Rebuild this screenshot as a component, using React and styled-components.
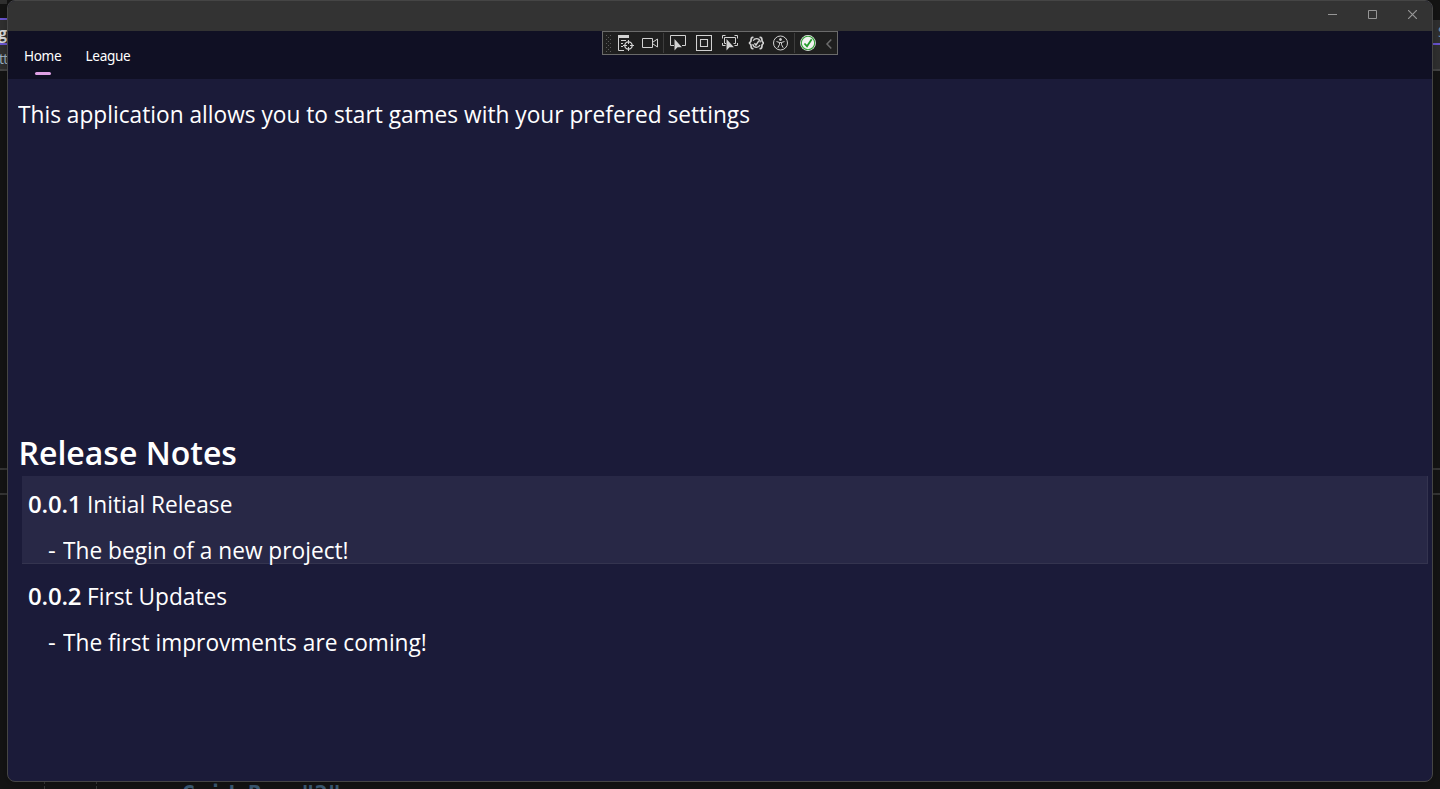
import React from 'react';
import styled, { createGlobalStyle } from 'styled-components';

const GlobalStyle = createGlobalStyle`
  * { box-sizing: border-box; }
  html, body { margin: 0; background: #141414; overflow: hidden; }
  body { font-family: "Open Sans", "Noto Sans", sans-serif; color: #fff; }
`;

const Desktop = styled.div`
  position: relative;
  width: 1440px;
  height: 789px;
  padding: 0 7px;
  background: #141414;
  overflow: hidden;
`;

/* Pieces of the editor that stay visible around the window */
const Strip = styled.div`
  position: absolute;
  ${(p) => (p.$right ? 'right: 0;' : 'left: 0;')}
  top: ${(p) => p.$top}px;
  width: ${(p) => p.$width || 7}px;
  height: ${(p) => p.$height}px;
  background: ${(p) => p.$color};
`;

const Fragment = styled.div`
  position: absolute;
  left: ${(p) => p.$left}px;
  top: ${(p) => p.$top}px;
  font: ${(p) => p.$weight || 400} ${(p) => p.$size}px/1 ${(p) => p.$family || '"Open Sans"'}, sans-serif;
  letter-spacing: ${(p) => p.$spacing || 0}px;
  color: ${(p) => p.$color};
  white-space: pre;
`;

const Guide = styled.div`
  position: absolute;
  left: ${(p) => p.$left}px;
  top: 781px;
  height: 8px;
  border-left: 1px dashed #3a3a3a;
`;

const Window = styled.main`
  position: relative;
  display: flex;
  flex-direction: column;
  width: 1426px;
  height: 782px;
  border: 1px solid #454545;
  border-radius: 8px;
  background: #1b1b39;
  overflow: hidden;
  box-shadow: 0 2px 10px rgba(0, 0, 0, 0.25);
`;

const TitleBar = styled.header`
  display: flex;
  justify-content: flex-end;
  flex: 0 0 30px;
  background: #333;
`;

const CaptionButton = styled.button`
  display: flex;
  align-items: center;
  justify-content: center;
  width: 40px;
  height: 27px;
  padding: 0 0 0 1px;
  border: 0;
  background: none;
  color: #969696;
`;

const Tabs = styled.nav`
  display: flex;
  flex: 0 0 48px;
  padding-left: 4px;
  background: #101024;
`;

const Tab = styled.a`
  display: flex;
  flex-direction: column;
  align-items: center;
  padding: 15px 12.3px 0 12px;
  font-family: "Noto Sans", sans-serif;
  font-size: 13.6px;
  line-height: 20px;
  letter-spacing: -0.35px;
`;

const Indicator = styled.span`
  width: 16px;
  height: 3px;
  margin-top: 6px;
  border-radius: 2px;
  background: #dfa1e5;
`;

const Content = styled.section`
  display: flex;
  flex-direction: column;
  padding: 18px 4px 0 10px;
`;

const Intro = styled.p`
  height: 336px;
  margin: 0;
  font-size: 24px;
  line-height: 34px;
  white-space: nowrap;
`;

const Narrow = styled.span`
  display: inline-block;
  transform: scaleX(0.9455);
  transform-origin: 0 50%;
`;

const Heading = styled.h1`
  margin: 0 0 3px 0.5px;
  font-size: 32px;
  font-weight: 600;
  line-height: 40px;
  height: 40px;
`;

const Release = styled.article`
  height: ${(p) => (p.$selected ? 88 : 92)}px;
  margin: 0 0 ${(p) => (p.$selected ? 4 : 0)}px 4px;
  padding: 5px 0 0 6px;
  border: solid transparent;
  border-width: 0 1px 1px 0;
  ${(p) => p.$selected && 'background: #282846; border-color: #34344f;'}
`;

const Line = styled.p`
  display: flex;
  margin: 0;
  padding-left: ${(p) => p.$indent || 0}px;
  font-size: 24px;
  line-height: 46px;
  height: 46px;
  white-space: nowrap;
`;

const Version = styled.span`
  width: 59px;
  font-weight: 600;
  letter-spacing: -0.2px;
`;

const Dash = styled.span`
  width: 15px;
`;

const DebugBar = styled.div`
  position: absolute;
  left: 594px;
  top: 30px;
  display: flex;
  align-items: flex-start;
  width: 236px;
  height: 24px;
  border: 1px solid #6a6a6a;
  background: #1f1f1f;
`;

const Tool = styled.svg`
  flex: none;
  width: ${(p) => p.$w || 16}px;
  height: 16px;
  margin: 3px 0 0 ${(p) => p.$gap}px;
  fill: none;
  stroke: #d2d2d2;
`;

const Grip = styled.span`
  flex: none;
  width: 6px;
  height: 18px;
  margin: 3px 0 0 3px;
  background:
    radial-gradient(circle at 0.5px 0.5px, #5c5c5c 0.7px, transparent 0.8px) 0 0 / 4px 4px,
    radial-gradient(circle at 0.5px 0.5px, #5c5c5c 0.7px, transparent 0.8px) 2px 2px / 4px 4px;
`;

const Divider = styled.span`
  flex: none;
  width: 1px;
  height: 20px;
  margin: 1px 0 0 ${(p) => p.$gap}px;
  background: #3d3d3d;
`;

function DebugTools() {
  return (
    <DebugBar>
      <Grip />
      <Tool $gap={6}>
        <path d="M0 0h11v3H0z" fill="#d2d2d2" stroke="none" />
        <path d="M.5 3v12.5H6M3 5.5h5M3 8.5h2M3 11.5h2" />
        <circle cx="10.5" cy="10.5" r="3.7" strokeWidth="1.3" />
        <path d="M10.5 5v4M10.5 12v4M5 10.5h4M12 10.5h4" />
      </Tool>
      <Tool $gap={8}>
        <path d="M.5 3.5h10v9H.5zM11 7l4.5-3v8L11 9" />
      </Tool>
      <Divider $gap={5} />
      <Tool $gap={6}>
        <path d="M4 10.5H.5V.5h15v10H12" />
        <path d="M4.5 4v11.5l3-3.3h4.4z" fill="#d2d2d2" stroke="none" />
      </Tool>
      <Tool $gap={10}>
        <path d="M.5.5h15v15H.5zM4.5 4.5h7v7h-7z" strokeWidth="1.1" />
      </Tool>
      <Tool $gap={10}>
        <path d="M.5 3.5v-3h3M12.5.5h3v3M.5 8v2.5h3M15.5 8v2.5h-3M4 8.5H2.5v-6h11v6h-2" />
        <path d="M4.5 4v11.5l3-3.3h4.4z" fill="#d2d2d2" stroke="none" />
      </Tool>
      <Tool $gap={10}>
        <path d="M5.500 2.500C2.800 2 3.200 4 2.900 6.200L1.500 8l1.400 1.800c.3 2.200-.1 4.200 2.600 3.700M11.500 2.500c2.700-.5 2.300 1.500 2.600 3.700L15.500 8l-1.400 1.800c-.3 2.200.1 4.200-2.600 3.700" strokeWidth="1.7" />
        <ellipse cx="8.500" cy="8" rx="3.900" ry="4.300" strokeWidth="1.300" strokeDasharray="9.500 3.380" strokeDashoffset="-2" />
        <path d="M6.400 8.200l1.600 1.800 3-4.300" strokeWidth="1.400" />
      </Tool>
      <Tool $gap={9}>
        <circle cx="7.5" cy="8" r="7" />
        <circle cx="7.5" cy="4.5" r="1" fill="#d2d2d2" />
        <path d="M3.5 6.5l3 1v2l-1.7 3.3M11.5 6.5l-3 1v2l1.7 3.3M6.5 7.5h2" />
      </Tool>
      <Divider $gap={5} />
      <Tool $gap={5}>
        <circle cx="8" cy="8" r="7.9" fill="#f2f2f2" stroke="none" />
        <circle cx="8" cy="8" r="6.7" stroke="#37a03c" strokeWidth="1.1" />
        <path d="M4.4 8.5L7 11.2l4.7-7" stroke="#239b2b" strokeWidth="1.8" />
      </Tool>
      <Tool $gap={9} $w={8}>
        <path d="M6.3 4.5L2 9 6.3 13.5" stroke="#6c6c6c" strokeWidth="1.5" />
      </Tool>
    </DebugBar>
  );
}

function EditorBackdrop() {
  return (
    <>
      {[false, true].map((right) => (
        <React.Fragment key={String(right)}>
          <Strip $right={right} $top={20} $height={50} $color="#303030" />
          <Strip $right={right} $top={43} $height={2} $color="#6a55d2" />
          <Strip $right={right} $top={69} $height={2} $color="#444" />
          <Strip $right={right} $top={468} $height={2} $color="#363636" />
          <Strip $right={right} $top={493} $height={2} $color="#363636" />
        </React.Fragment>
      ))}
      <Strip $top={0} $height={4} $color="#303030" />
      <Strip $top={18} $height={2} $color="#6a55d2" />
      <Fragment $left={-2} $top={25} $size={16} $weight={700} $color="#dcdcdc">g</Fragment>
      <Fragment $left={-1} $top={52} $size={14} $spacing={-0.7} $color="#9fb4c4">tt</Fragment>
      <Fragment $left={1438} $top={25} $size={14} $color="#7295b5">S</Fragment>
      <Guide $left={44} />
      <Guide $left={96} />
      <Fragment $left={182} $top={783} $size={22} $weight={700} $family='"DejaVu Sans Mono"' $color="#3d5c76">
        Grid.Row="2"
      </Fragment>
    </>
  );
}

const releases = [
  { version: '0.0.1', title: 'Initial Release', note: 'The begin of a new project!', selected: true },
  { version: '0.0.2', title: 'First Updates', note: 'The first improvments are coming!' },
];

export default function App() {
  return (
    <>
      <GlobalStyle />
      <Desktop>
        <EditorBackdrop />
        <Window>
          <TitleBar>
            <CaptionButton aria-label="Minimize">
              <svg width="9" height="9" stroke="currentColor"><path d="M0 4.5h9" /></svg>
            </CaptionButton>
            <CaptionButton aria-label="Maximize">
              <svg width="9" height="9" fill="none" stroke="currentColor"><path d="M.5.5h8v8h-8z" /></svg>
            </CaptionButton>
            <CaptionButton aria-label="Close">
              <svg width="9" height="9" stroke="currentColor" strokeWidth="1.2"><path d="M0 0l9 9M9 0L0 9" /></svg>
            </CaptionButton>
          </TitleBar>
          <Tabs>
            <Tab>Home<Indicator /></Tab>
            <Tab>League</Tab>
          </Tabs>
          <Content>
            <Intro>
              <Narrow>This application allows you to start games with your prefered settings</Narrow>
            </Intro>
            <Heading>Release Notes</Heading>
            {releases.map((r) => (
              <Release key={r.version} $selected={r.selected}>
                <Line><Version>{r.version}</Version><Narrow>{r.title}</Narrow></Line>
                <Line $indent={20}><Dash>-</Dash><Narrow>{r.note}</Narrow></Line>
              </Release>
            ))}
          </Content>
          <DebugTools />
        </Window>
      </Desktop>
    </>
  );
}
